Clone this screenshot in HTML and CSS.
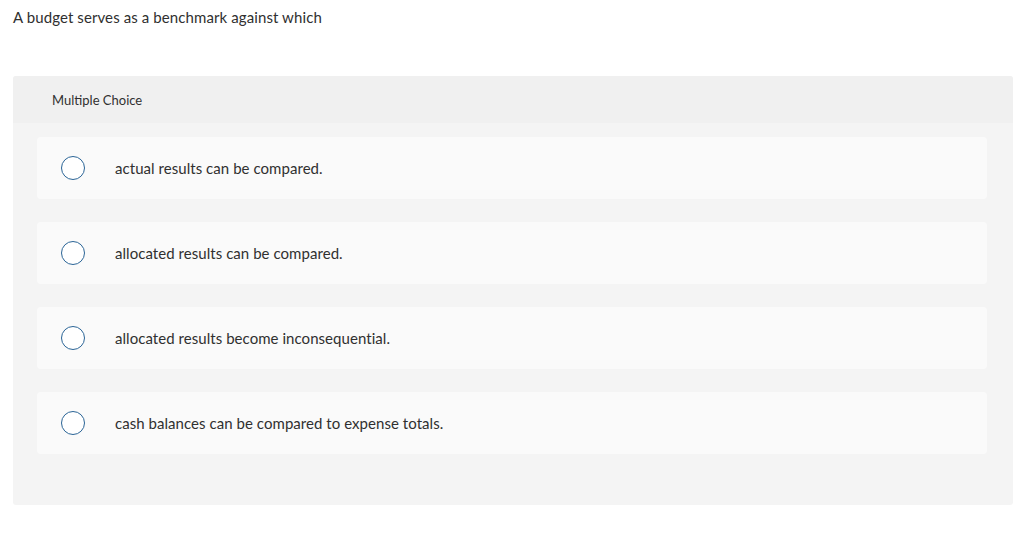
FILE: index.html
```html
<!DOCTYPE html>
<html>
<head>
<meta charset="utf-8">
<link rel="stylesheet" href="styles.css">
</head>
<body>
<p class="prompt">A budget serves as a benchmark against which</p>
<section class="panel">
  <div class="panel-head">Multiple Choice</div>
  <div class="panel-body">
    <label class="option"><span class="radio"></span><span class="opt-text">actual results can be compared.</span></label>
    <label class="option"><span class="radio"></span><span class="opt-text">allocated results can be compared.</span></label>
    <label class="option"><span class="radio"></span><span class="opt-text">allocated results become inconsequential.</span></label>
    <label class="option"><span class="radio"></span><span class="opt-text">cash balances can be compared to expense totals.</span></label>
  </div>
</section>
</body>
</html>
```
FILE: styles.css
```css
html, body { margin: 0; padding: 0; background: #fff; }
body {
  font-family: Lato, "Open Sans", sans-serif;
  color: #303030;
  padding: 0 11px 0 13px;
}
.prompt {
  margin: 0;
  padding-top: 8px;
  height: 76px;
  box-sizing: border-box;
  font-size: 15px;
  line-height: 18px;
  letter-spacing: 0.1px;
}
.panel {
  background: #f4f4f4;
  border-radius: 3px;
  overflow: hidden;
  height: 429px;
}
.panel-head {
  background: #f0f0f0;
  height: 47px;
  box-sizing: border-box;
  display: flex;
  align-items: center;
  padding-left: 39px;
  font-size: 13px;
}
.panel-body {
  padding: 14px 26px 0 24px;
  display: flex;
  flex-direction: column;
  gap: 23px;
}
.option {
  display: flex;
  align-items: center;
  height: 62px;
  background: #fafafa;
  border-radius: 4px;
  padding-left: 24px;
  font-size: 15px;
  letter-spacing: 0.05px;
}
.radio {
  width: 24px;
  height: 24px;
  box-sizing: border-box;
  border: 1.5px solid #2a6496;
  border-radius: 50%;
  background: #fff;
  flex: none;
}
.opt-text { margin-left: 30px; }
```
